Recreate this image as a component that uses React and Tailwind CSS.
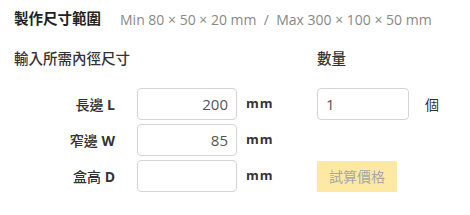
import React from 'react';

const font = { fontFamily: '"Open Sans", "Noto Sans CJK TC", sans-serif' };

const rows = [
  { label: '長邊', unit: 'L', value: '200' },
  { label: '窄邊', unit: 'W', value: '85' },
  { label: '盒高', unit: 'D', value: '' },
];

const App = () => {
  return (
    <div className="w-[470px] h-[215px] bg-white pl-[14px] pt-[9px] text-[#333]" style={font}>
      <div className="flex items-center h-[20px]">
        <span className="text-[14.5px] font-bold text-[#222]">製作尺寸範圍</span>
        <span className="ml-[19px] text-[14px] text-[#888]">
          Min 80 × 50 × 20 mm&nbsp;&nbsp;/&nbsp;&nbsp;Max 300 × 100 × 50 mm
        </span>
      </div>

      <div className="flex mt-[20px]">
        <div className="w-[303px]">
          <div className="h-[20px] flex items-center text-[14.5px] font-medium text-[#333]">輸入所需內徑尺寸</div>
          <div className="mt-[19px] flex flex-col gap-[4px]">
            {rows.map((row) => (
              <div key={row.unit} className="flex items-center h-[32px]">
                <div className="w-[101px] text-right text-[14px] font-medium text-[#333]">
                  {row.label} <span className="font-bold">{row.unit}</span>
                </div>
                <input
                  readOnly
                  value={row.value}
                  className="ml-[22px] w-[100px] h-[32px] border border-[#d4d4d4] rounded-[4px] px-[8px] text-right text-[15px] text-[#555] outline-none"
                />
                <span className="ml-[9px] text-[13px] font-bold tracking-[1px] text-[#333]">mm</span>
              </div>
            ))}
          </div>
        </div>

        <div>
          <div className="h-[20px] flex items-center text-[14.5px] font-medium text-[#333]">數量</div>
          <div className="mt-[19px] flex flex-col gap-[4px]">
            <div className="flex items-center h-[32px]">
              <input
                readOnly
                value="1"
                className="w-[92px] h-[32px] border border-[#d4d4d4] rounded-[4px] px-[8px] text-[15px] text-[#555] outline-none"
              />
              <span className="ml-[16px] text-[14px] text-[#333]">個</span>
            </div>
            <div className="h-[32px]" />
            <div className="flex items-center h-[32px]">
              <button className="w-[80px] h-[31px] bg-[#fde8a4] text-[14px] text-[#a8a8a8] rounded-[1px]">
                試算價格
              </button>
            </div>
          </div>
        </div>
      </div>
    </div>
  );
};

export default App;
